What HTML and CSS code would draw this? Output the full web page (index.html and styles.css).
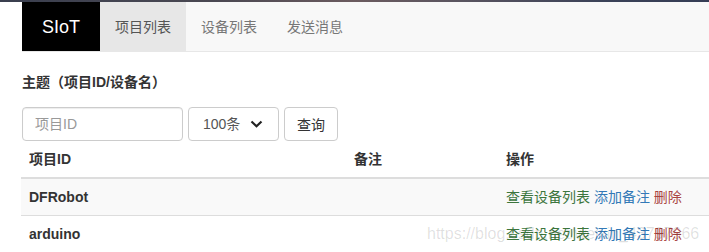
FILE: index.html
```html
<!DOCTYPE html>
<html lang="zh">
<head>
    <meta charset="UTF-8">
    <meta name="viewport" content="width=device-width, initial-scale=1.0">
    <title>SIoT</title>
    <link rel="stylesheet" href="styles.css">
</head>
<body>
    <div class="top-strip"></div>
    <nav class="navbar">
        <a class="brand" href="#">SIoT</a>
        <a class="nav-item active" href="#">项目列表</a>
        <a class="nav-item" href="#">设备列表</a>
        <a class="nav-item" href="#">发送消息</a>
    </nav>

    <div class="content">
        <label class="topic-label">主题（项目ID/设备名）</label>
        <div class="search-form">
            <input type="text" class="form-input" placeholder="项目ID">
            <div class="select-box">
                <span>100条</span>
                <svg width="13" height="8" viewBox="0 0 13 8"><path d="M1.5 1.5 L6.5 6.2 L11.5 1.5" fill="none" stroke="#222" stroke-width="2.2"/></svg>
            </div>
            <button class="btn">查询</button>
        </div>

        <table class="table">
            <thead>
                <tr>
                    <th class="col-id">项目ID</th>
                    <th class="col-note">备注</th>
                    <th>操作</th>
                </tr>
            </thead>
            <tbody>
                <tr class="striped">
                    <td class="bold">DFRobot</td>
                    <td></td>
                    <td><a class="text-success" href="#">查看设备列表</a> <a class="text-primary" href="#">添加备注</a> <a class="text-danger" href="#">删除</a></td>
                </tr>
                <tr>
                    <td class="bold">arduino</td>
                    <td></td>
                    <td><a class="text-success" href="#">查看设备列表</a> <a class="text-primary" href="#">添加备注</a> <a class="text-danger" href="#">删除</a></td>
                </tr>
            </tbody>
        </table>
    </div>

    <div class="watermark">https://blog.csdn.net/weixin_43797966</div>
</body>
</html>
```

FILE: styles.css
```css
body {
    margin: 0;
    font-family: "Liberation Sans", "Noto Sans CJK SC", sans-serif;
    font-size: 14px;
    line-height: 20px;
    color: #333;
    background: #fff;
    overflow: hidden;
}
a {
    text-decoration: none;
}
.top-strip {
    height: 2px;
    background: linear-gradient(to right, #3a3f4f 0%, #4a4852 30%, #6b5b5f 50%, #5a5560 65%, #3b4258 85%, #353d55 100%);
}
.navbar {
    display: flex;
    height: 49px;
    margin-left: 22px;
    background: #f8f8f8;
    border-bottom: 1px solid #e7e7e7;
}
.brand {
    display: flex;
    align-items: center;
    padding: 0 20px;
    background: #000;
    color: #fff;
    font-size: 18px;
}
.nav-item {
    display: flex;
    align-items: center;
    padding: 0 15px;
    color: #777;
}
.nav-item.active {
    background: #e7e7e7;
    color: #555;
}
.content {
    padding-left: 21px;
}
.topic-label {
    display: block;
    margin: 20px 0 0 1px;
    font-weight: bold;
}
.search-form {
    display: flex;
    gap: 5px;
    margin: 15px 0 0 1px;
}
.form-input {
    box-sizing: border-box;
    width: 161px;
    height: 34px;
    padding: 6px 12px;
    border: 1px solid #ccc;
    border-radius: 4px;
    font-family: inherit;
    font-size: 14px;
    color: #555;
    box-shadow: inset 0 1px 1px rgba(0, 0, 0, 0.075);
}
.form-input::placeholder {
    color: #999;
}
.select-box {
    box-sizing: border-box;
    width: 91px;
    height: 34px;
    display: flex;
    align-items: center;
    justify-content: space-between;
    padding: 0 15px 0 14px;
    border: 1px solid #ccc;
    border-radius: 4px;
    color: #555;
}
.btn {
    box-sizing: border-box;
    height: 34px;
    padding: 6px 12px;
    border: 1px solid #ccc;
    border-radius: 4px;
    background: #fff;
    font-family: inherit;
    font-size: 14px;
    color: #333;
}
.table {
    width: 700px;
    border-collapse: collapse;
}
.table th,
.table td {
    padding: 8px;
    text-align: left;
    line-height: 20px;
}
.table th {
    border-bottom: 2px solid #ddd;
}
.table td {
    border-top: 1px solid #ddd;
}
.col-id {
    width: 309px;
}
.col-note {
    width: 136px;
}
.striped td {
    background: #f9f9f9;
}
.bold {
    font-weight: bold;
}
.text-success {
    color: #3c763d;
}
.text-primary {
    color: #337ab7;
}
.text-danger {
    color: #a94442;
}
.watermark {
    position: absolute;
    left: 427px;
    top: 224px;
    font-size: 16px;
    line-height: 20px;
    color: rgba(0, 0, 0, 0.13);
    pointer-events: none;
    white-space: nowrap;
}
```
